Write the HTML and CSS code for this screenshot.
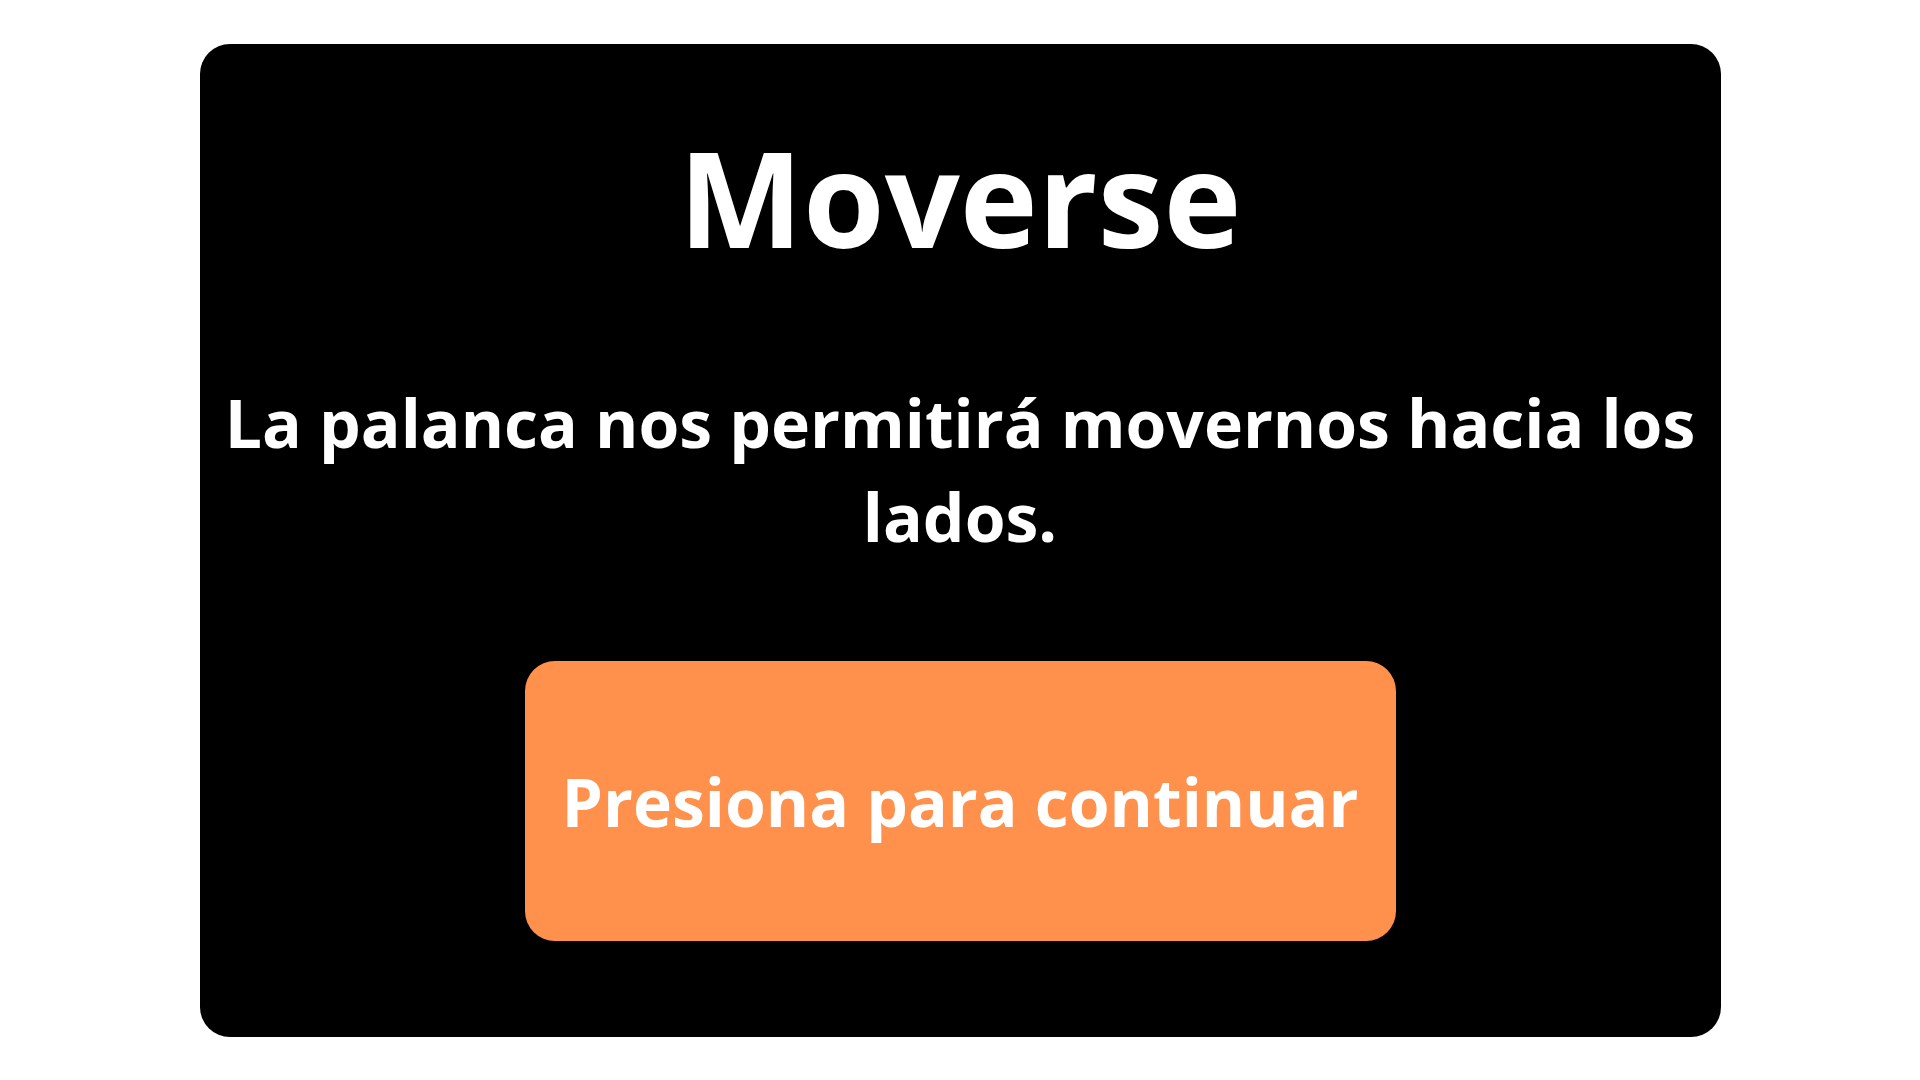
FILE: index.html
```html
<!DOCTYPE html>
<html lang="es">
<head>
<meta charset="utf-8">
<title>Moverse</title>
<link rel="stylesheet" href="styles.css">
</head>
<body>
<main class="page">
  <section class="card">
    <h1 class="title">Moverse</h1>
    <p class="text">La palanca nos permitirá movernos hacia los lados.</p>
    <button class="continue" type="button">Presiona para continuar</button>
  </section>
</main>
</body>
</html>
```
FILE: styles.css
```css
html, body {
  margin: 0;
  padding: 0;
  background: #ffffff;
}

.page {
  width: 1920px;
  height: 1080px;
  display: flex;
  align-items: center;
  justify-content: center;
  font-family: "Open Sans", "Noto Sans", sans-serif;
  font-weight: 700;
  color: #ffffff;
}

.card {
  box-sizing: border-box;
  width: 1521px;
  height: 993px;
  background: #000000;
  border-radius: 30px;
  display: flex;
  flex-direction: column;
  align-items: center;
  padding: 87px 10px 0;
}

.title {
  margin: 0;
  font-size: 132px;
  line-height: 132px;
  font-weight: 700;
  text-align: center;
}

.text {
  margin: 112px 0 0;
  font-size: 66px;
  line-height: 94px;
  text-align: center;
}

.continue {
  margin-top: 98px;
  width: 871px;
  height: 280px;
  border: none;
  border-radius: 30px;
  background: #ff914d;
  color: #ffffff;
  font-family: "Open Sans", "Noto Sans", sans-serif;
  font-weight: 700;
  font-size: 66px;
  line-height: normal;
  padding: 0;
  display: flex;
  align-items: center;
  justify-content: center;
}
```
